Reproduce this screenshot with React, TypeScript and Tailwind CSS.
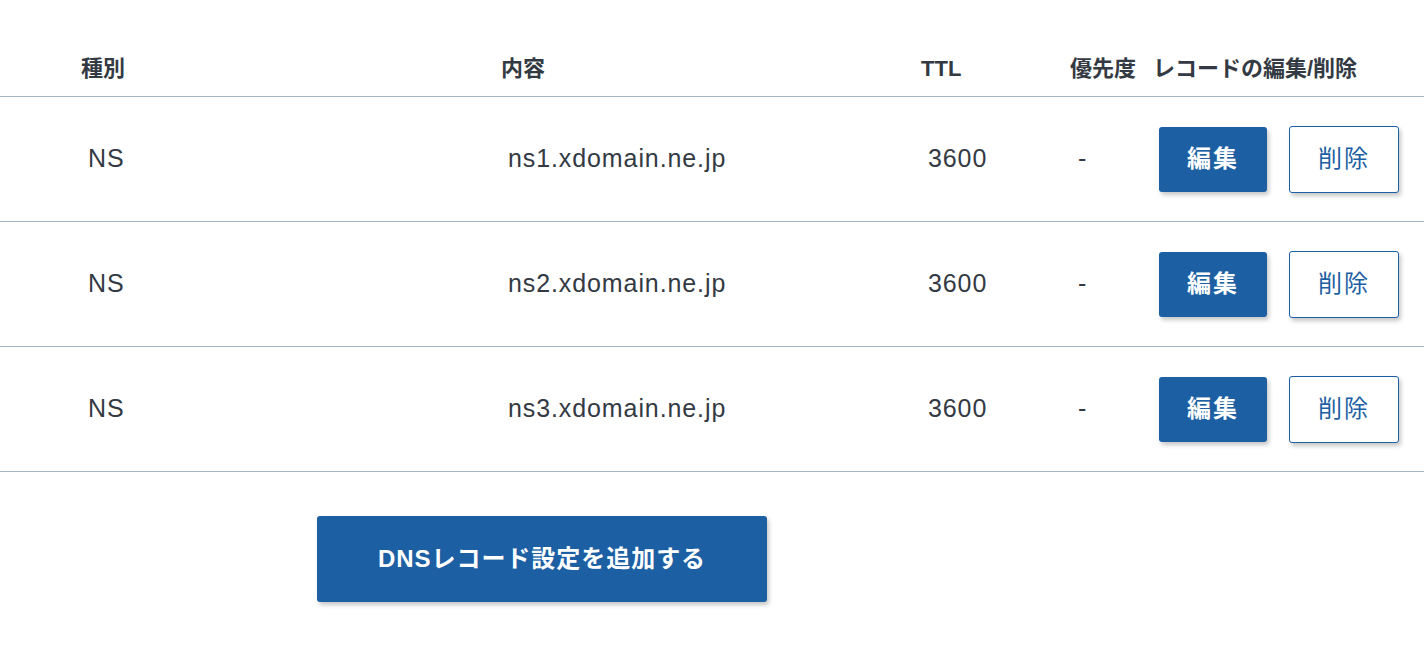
const records = [
  { type: "NS", content: "ns1.xdomain.ne.jp", ttl: "3600", priority: "-" },
  { type: "NS", content: "ns2.xdomain.ne.jp", ttl: "3600", priority: "-" },
  { type: "NS", content: "ns3.xdomain.ne.jp", ttl: "3600", priority: "-" },
];

const cols = "grid grid-cols-[420px_420px_149px_83px_1fr] pl-[81px]";

export default function App() {
  return (
    <div
      className="w-[1424px] h-[650px] bg-white text-[#343a43]"
      style={{ fontFamily: '"Liberation Sans", "Noto Sans CJK JP", sans-serif' }}
    >
      {/* header */}
      <div className={`${cols} h-[97px] items-end pb-[16px] border-b border-[#a5b6c7] text-[22px] leading-none font-bold`}>
        <div>種別</div>
        <div>内容</div>
        <div>TTL</div>
        <div>優先度</div>
        <div className="whitespace-nowrap">レコードの編集/削除</div>
      </div>

      {records.map((r) => (
        <div
          key={r.content}
          className={`${cols} h-[125px] items-center border-b border-[#a5b6c7] text-[25px] tracking-[0.9px]`}
        >
          <div className="pl-[7px]">{r.type}</div>
          <div className="pl-[7px]">{r.content}</div>
          <div className="pl-[7px]">{r.ttl}</div>
          <div className="pl-[8px]">{r.priority}</div>
          <div className="flex items-center gap-[22px] pl-[6px]">
            <button className="w-[108px] h-[65px] rounded-[3px] bg-[#1d5fa3] text-white text-[24px] tracking-[0.08em] font-bold shadow-[2px_3px_4px_rgba(0,0,0,0.22)]">
              編集
            </button>
            <button className="w-[110px] h-[67px] rounded-[3px] border border-[#1d5fa3] bg-white text-[#1d5fa3] text-[24px] tracking-[0.08em] shadow-[2px_3px_4px_rgba(0,0,0,0.22)]">
              削除
            </button>
          </div>
        </div>
      ))}

      <div className="pl-[317px] pt-[44px]">
        <button className="w-[450px] h-[86px] rounded-[3px] bg-[#1d5fa3] text-white text-[24px] tracking-[0.04em] font-bold shadow-[2px_3px_4px_rgba(0,0,0,0.22)]">
          DNSレコード設定を追加する
        </button>
      </div>
    </div>
  );
}
